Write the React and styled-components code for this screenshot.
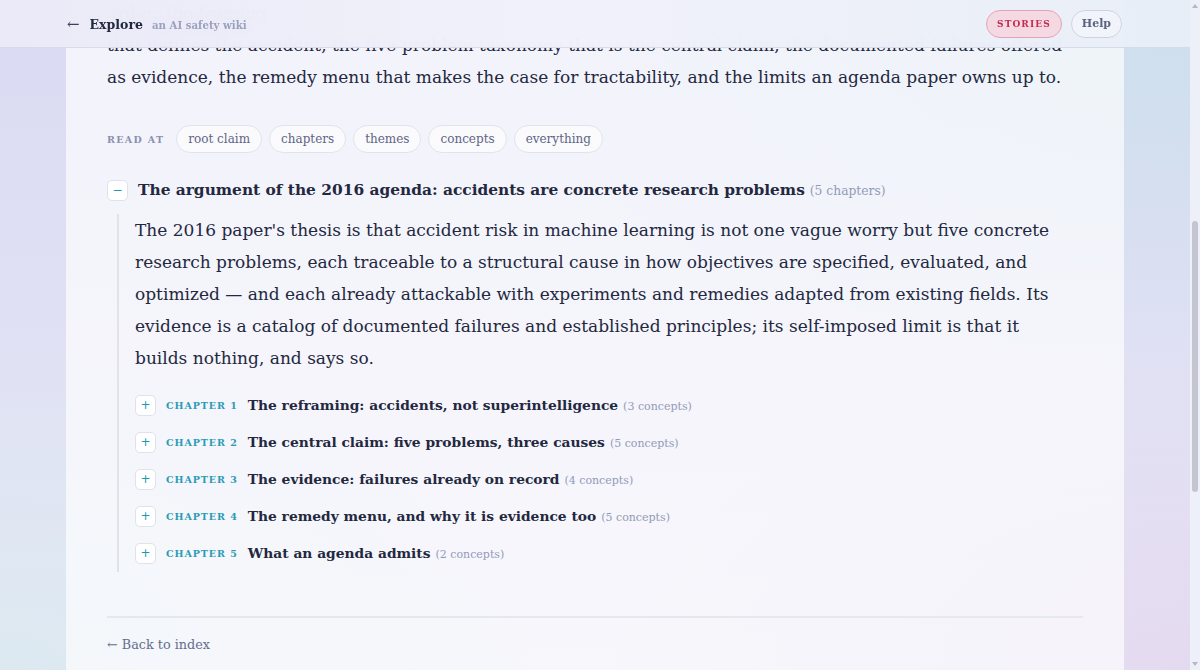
import React, { useLayoutEffect, useRef, useState } from 'react'
import styled, { createGlobalStyle } from 'styled-components'

const serif = `"DejaVu Serif", "Liberation Serif", serif`

const GlobalStyle = createGlobalStyle`
  html {
    overflow-y: scroll;
    scrollbar-width: none;
  }
  html::-webkit-scrollbar {
    display: none;
  }
  body {
    margin: 0;
    font-family: ${serif};
    color: #23283f;
    background-color: #e3e4f4;
    background-image:
      radial-gradient(ellipse 60% 55% at 100% 0%, #cde0ec 0%, rgba(205, 224, 236, 0) 100%),
      radial-gradient(ellipse 45% 50% at 0% 100%, #dce9f1 0%, rgba(220, 233, 241, 0) 100%),
      radial-gradient(ellipse 50% 50% at 100% 100%, #e4daf0 0%, rgba(228, 218, 240, 0) 100%),
      linear-gradient(180deg, #dadbf3 0%, #e6e6f5 100%);
    background-attachment: fixed;
  }
  * {
    box-sizing: border-box;
  }
`

const Header = styled.header`
  position: fixed;
  top: 0;
  left: 0;
  right: 10px;
  z-index: 10;
  height: 48px;
  display: flex;
  align-items: center;
  justify-content: space-between;
  padding: 0 68px 0 67px;
  background: linear-gradient(
    90deg,
    rgba(234, 234, 248, 0.97) 0%,
    rgba(240, 241, 250, 0.97) 50%,
    rgba(232, 238, 247, 0.97) 100%
  );
  backdrop-filter: blur(20px);
  border-bottom: 1px solid rgba(214, 217, 232, 0.9);
`

const Brand = styled.div`
  display: flex;
  align-items: baseline;
  gap: 9px;
`

const BackArrow = styled.span`
  font-size: 15px;
  color: #3b4059;
  margin-right: 1px;
`

const BrandName = styled.span`
  font-size: 12.5px;
  font-weight: 700;
  color: #23283f;
`

const Tagline = styled.span`
  font-size: 10.2px;
  font-weight: 700;
  color: #9ba1be;
`

const Nav = styled.nav`
  display: flex;
  gap: 9px;
`

const NavPill = styled.button`
  height: 28px;
  padding: 0 10px;
  border-radius: 14px;
  font-family: ${serif};
  font-weight: 700;
  cursor: pointer;
  border: 1px solid ${p => (p.$accent ? '#e6a3b5' : '#cfd3e1')};
  background: ${p => (p.$accent ? '#f5d9e2' : 'rgba(255, 255, 255, 0.35)')};
  color: ${p => (p.$accent ? '#c62a50' : '#5a6282')};
  font-size: ${p => (p.$accent ? '9px' : '11px')};
  letter-spacing: ${p => (p.$accent ? '0.12em' : '0')};
`

/* thin scroll rail drawn along the right edge */
const Rail = styled.div`
  position: fixed;
  top: 0;
  right: 0;
  bottom: 0;
  width: 10px;
  z-index: 20;
  background: #eef0f9;
`

const RailArrow = styled.div`
  position: absolute;
  left: 2px;
  width: 0;
  height: 0;
  border-left: 3px solid transparent;
  border-right: 3px solid transparent;
  ${p =>
    p.$down
      ? 'bottom: 4px; border-top: 4px solid #b4b7c4;'
      : 'top: 4px; border-bottom: 4px solid #b4b7c4;'}
`

const RailThumb = styled.div`
  position: absolute;
  left: 2px;
  width: 6px;
  border-radius: 3px;
  background: #c3c5d1;
`

const Page = styled.main`
  padding: 72px 76px 370px 66px;
`

const Card = styled.article`
  background: rgba(255, 255, 255, 0.66);
  border-radius: 16px;
  padding: 40px 41px 48px;
`

const Kicker = styled.div`
  font-size: 10px;
  font-weight: 700;
  letter-spacing: 0.14em;
  text-transform: uppercase;
  color: #2a9bb6;
`

const Title = styled.h1`
  margin: 12px 0 8px;
  font-size: 32px;
  line-height: 1.2;
`

const Byline = styled.div`
  font-size: 14px;
  color: #7a819f;
`

const Abstract = styled.blockquote`
  margin: 40px 0 0;
  padding-left: 16px;
  border-left: 2px solid #e0e3ec;
  font-size: 15px;
  line-height: 26px;
  color: #4a5070;
`

const Subhead = styled.h3`
  margin: 56px 0 0;
  font-size: 17px;
  line-height: 26px;
`

const Lede = styled.p`
  margin: 12px 0 0;
  font-size: 17px;
  line-height: 32px;
`

const ReadAt = styled.div`
  display: flex;
  align-items: center;
  gap: 7px;
  margin-top: 32px;
`

const ReadAtLabel = styled.span`
  font-size: 9.5px;
  font-weight: 700;
  letter-spacing: 0.14em;
  color: #8a90ad;
  margin-right: 5px;
`

const LevelPill = styled.button`
  height: 28px;
  padding: 0 11px;
  border: 1px solid #e1e3ee;
  border-radius: 14px;
  background: rgba(255, 255, 255, 0.6);
  font-family: ${serif};
  font-size: 12px;
  color: #5d6484;
  cursor: pointer;
`

const Section = styled.section`
  margin-top: 25px;
`

const Row = styled.div`
  display: flex;
  align-items: center;
  gap: 10px;
  height: 24px;
`

const Toggle = styled.button`
  flex: none;
  width: 21px;
  height: 21px;
  padding: 0;
  display: grid;
  place-items: center;
  border: 1px solid #dfe2ec;
  border-radius: 5px;
  background: #fff;
  color: #1c98b1;
  font-family: "DejaVu Sans", sans-serif;
  font-size: 12px;
  line-height: 1;
  cursor: pointer;
`

const SectionTitle = styled.h2`
  margin: 0;
  font-size: 15.4px;
  font-weight: 700;
`

const Count = styled.span`
  margin-left: 5px;
  font-size: ${p => (p.$small ? '11px' : '12.3px')};
  font-weight: 400;
  color: #939ab9;
`

const SectionBody = styled.div`
  margin: 12px 0 0 10px;
  padding: 0 18px 7px 16px;
  border-left: 2px solid #e0e3ec;
`

const Thesis = styled.p`
  margin: 0;
  font-size: 17px;
  line-height: 32px;
`

const ChapterList = styled.ul`
  list-style: none;
  margin: 19px 0 0;
  padding: 0;
  display: flex;
  flex-direction: column;
  gap: 13px;
`

const ChapterLabel = styled.span`
  flex: none;
  font-size: 9.5px;
  font-weight: 700;
  letter-spacing: 0.1em;
  color: #2a9bb6;
`

const ChapterTitle = styled.span`
  font-size: 13.8px;
  font-weight: 700;
`

const Divider = styled.hr`
  margin: 44px 0 0;
  border: 0;
  border-top: 2px solid #e6e8f1;
`

const BackLink = styled.a`
  display: inline-block;
  margin-top: 19px;
  font-size: 12.8px;
  color: #666d8d;
  text-decoration: none;
`

const chapters = [
  { title: 'The reframing: accidents, not superintelligence', concepts: 3 },
  { title: 'The central claim: five problems, three causes', concepts: 5 },
  { title: 'The evidence: failures already on record', concepts: 4 },
  { title: 'The remedy menu, and why it is evidence too', concepts: 5 },
  { title: 'What an agenda admits', concepts: 2 },
]

const levels = ['root claim', 'chapters', 'themes', 'concepts', 'everything']

const ARROW_SPACE = 15

const App = () => {
  const readAtRef = useRef(null)
  const [thumb, setThumb] = useState({ top: ARROW_SPACE, height: 0 })

  // open the page where the reading-level controls sit just under the header
  useLayoutEffect(() => {
    const el = readAtRef.current
    if (!el) return
    const top = el.getBoundingClientRect().top + window.scrollY
    window.scrollTo(0, top - 125)

    const docH = document.documentElement.scrollHeight
    const viewH = window.innerHeight
    const track = viewH - ARROW_SPACE * 2
    setThumb({
      top: ARROW_SPACE + (window.scrollY / docH) * track,
      height: (viewH / docH) * track,
    })
  }, [])

  return (
    <>
      <GlobalStyle />
      <Header>
        <Brand>
          <BackArrow>←</BackArrow>
          <BrandName>Explore</BrandName>
          <Tagline>an AI safety wiki</Tagline>
        </Brand>
        <Nav>
          <NavPill $accent>STORIES</NavPill>
          <NavPill>Help</NavPill>
        </Nav>
      </Header>
      <Rail>
        <RailArrow />
        <RailThumb style={{ top: thumb.top, height: thumb.height }} />
        <RailArrow $down />
      </Rail>
      <Page>
        <Card>
          <Kicker>Paper · 2016</Kicker>
          <Title>Concrete Problems in AI Safety</Title>
          <Byline>Amodei, Olah, Steinhardt, Christiano, Schulman, Mané</Byline>
          <Abstract>
            Rapid progress in machine learning has brought increasing attention to the potential
            impacts of AI on society. We discuss one such impact: the problem of accidents in machine
            learning systems, defined as unintended and harmful behavior that may emerge from poor
            design of real-world AI systems.
          </Abstract>
          <Subhead>How this map reads</Subhead>
          <Lede>
            Concrete Problems in AI Safety is less a result than an agenda: it argues that the risk of
            unintended, harmful behaviour in learning systems can be split into research problems that
            current methods can already touch. This map follows the argument the way the paper builds
            it, through the framing and the examples behind it, read in order: the framing<br />
            that defines the accident, the five-problem taxonomy that is the central claim, the
            documented failures offered<br />
            as evidence, the remedy menu that makes the case for tractability, and the limits an
            agenda paper owns up to.
          </Lede>

          <ReadAt ref={readAtRef}>
            <ReadAtLabel>READ AT</ReadAtLabel>
            {levels.map(l => (
              <LevelPill key={l}>{l}</LevelPill>
            ))}
          </ReadAt>

          <Section>
            <Row>
              <Toggle>−</Toggle>
              <SectionTitle>
                The argument of the 2016 agenda: accidents are concrete research problems
                <Count>(5 chapters)</Count>
              </SectionTitle>
            </Row>
            <SectionBody>
              <Thesis>
                The 2016 paper's thesis is that accident risk in machine learning is not one vague worry
                but five concrete research problems, each traceable to a structural cause in how
                objectives are specified, evaluated, and optimized — and each already attackable with
                experiments and remedies adapted from existing fields. Its evidence is a catalog of
                documented failures and established principles; its self-imposed limit is that it
                builds nothing, and says so.
              </Thesis>
              <ChapterList>
                {chapters.map((c, i) => (
                  <Row as="li" key={c.title}>
                    <Toggle>+</Toggle>
                    <ChapterLabel>CHAPTER {i + 1}</ChapterLabel>
                    <ChapterTitle>
                      {c.title}
                      <Count $small>({c.concepts} concepts)</Count>
                    </ChapterTitle>
                  </Row>
                ))}
              </ChapterList>
            </SectionBody>
          </Section>

          <Divider />
          <BackLink href="#">← Back to index</BackLink>
        </Card>
      </Page>
    </>
  )
}

export default App
